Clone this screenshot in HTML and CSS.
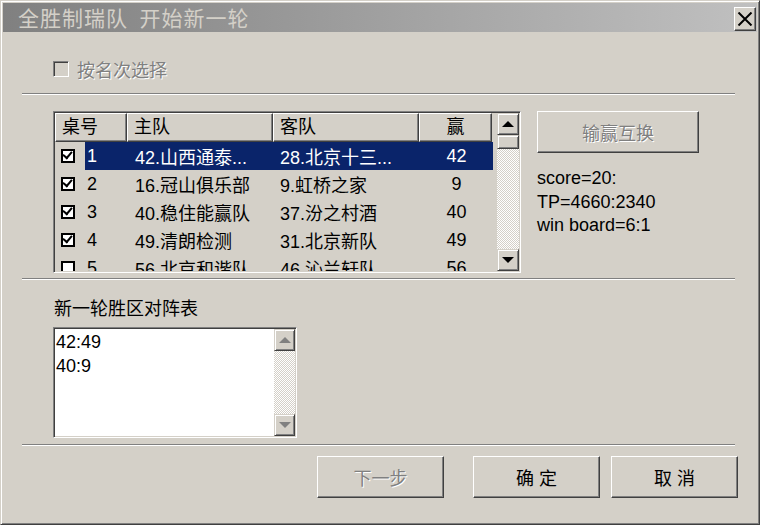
FILE: index.html
```html
<!DOCTYPE HTML>
<html>

<head>
  <meta charset="utf-8">
  <link rel="stylesheet" href="styles.css">
</head>

<body>
  <div class="window">
    <div class="titlebar">
      <span class="title">全胜制瑞队&nbsp;&nbsp;开始新一轮</span>
      <div class="close">
        <svg width="16" height="14" viewBox="0 0 16 14">
          <path d="M1.5 0.5 L14.5 13.5 M14.5 0.5 L1.5 13.5" stroke="#000" stroke-width="2" fill="none"/>
        </svg>
      </div>
    </div>

    <div class="content">
      <div class="rank-opt">
        <span class="chk3d"></span>
        <span class="dis">按名次选择</span>
      </div>

      <div class="sep"></div>

      <div class="middle">
        <div class="listview">
          <div class="lv-main">
            <div class="lv-head">
              <div class="hcell c1">桌号</div>
              <div class="hcell c2">主队</div>
              <div class="hcell c3">客队</div>
              <div class="hcell c4 center">赢</div>
            </div>
            <div class="lv-rows">
              <div class="row selected">
                <span class="chk on"></span>
                <div class="sel">
                  <span class="num">1</span>
                  <span class="c2">42.山西通泰...</span>
                  <span class="c3">28.北京十三...</span>
                  <span class="c4 center">42</span>
                </div>
              </div>
              <div class="row">
                <span class="chk on"></span>
                <div class="sel">
                  <span class="num">2</span>
                  <span class="c2">16.冠山俱乐部</span>
                  <span class="c3">9.虹桥之家</span>
                  <span class="c4 center">9</span>
                </div>
              </div>
              <div class="row">
                <span class="chk on"></span>
                <div class="sel">
                  <span class="num">3</span>
                  <span class="c2">40.稳住能赢队</span>
                  <span class="c3">37.汾之村酒</span>
                  <span class="c4 center">40</span>
                </div>
              </div>
              <div class="row">
                <span class="chk on"></span>
                <div class="sel">
                  <span class="num">4</span>
                  <span class="c2">49.清朗检测</span>
                  <span class="c3">31.北京新队</span>
                  <span class="c4 center">49</span>
                </div>
              </div>
              <div class="row">
                <span class="chk"></span>
                <div class="sel">
                  <span class="num">5</span>
                  <span class="c2">56.北京和谐队</span>
                  <span class="c3">46.沁兰轩队</span>
                  <span class="c4 center">56</span>
                </div>
              </div>
            </div>
          </div>
          <div class="vscroll">
            <div class="sbtn"><span class="arr up"></span></div>
            <div class="thumb"></div>
            <div class="track"></div>
            <div class="sbtn"><span class="arr down"></span></div>
          </div>
        </div>

        <div class="side">
          <div class="btn swap"><span class="dis">输赢互换</span></div>
          <div class="stats">
            score=20:<br>
            TP=4660:2340<br>
            win board=6:1
          </div>
        </div>
      </div>

      <div class="sep sep2"></div>

      <div class="caption">新一轮胜区对阵表</div>
      <div class="memo">
        <div class="memo-text">
          42:49<br>
          40:9
        </div>
        <div class="vscroll small">
          <div class="sbtn"><span class="arr up grey"></span></div>
          <div class="track"></div>
          <div class="sbtn"><span class="arr down grey"></span></div>
        </div>
      </div>

      <div class="sep sep3"></div>

      <div class="actions">
        <div class="btn"><span class="dis">下一步</span></div>
        <div class="btn ok">确&nbsp;定</div>
        <div class="btn">取&nbsp;消</div>
      </div>
    </div>
  </div>
</body>

</html>
```

FILE: styles.css
```css
html, body {
    margin: 0;
    padding: 0;
    background: #d4d0c8;
}
body {
    font-family: "Liberation Sans", "Noto Sans CJK SC", sans-serif;
    font-size: 18px;
    color: #000;
}
.window {
    width: 760px;
    height: 525px;
    box-sizing: border-box;
    border: 1px solid;
    border-color: #d4d0c8 #404040 #404040 #d4d0c8;
    box-shadow: inset 1px 1px #fff, inset -1px -1px #808080;
    padding: 2px;
    background: #d4d0c8;
}

/* title bar */
.titlebar {
    height: 29px;
    display: flex;
    align-items: center;
    justify-content: space-between;
    background: linear-gradient(to right, #808080, #c0c0c0);
    padding: 0 1px 0 15px;
}
.title {
    color: #d4d0c8;
    font-size: 21px;
    letter-spacing: 1px;
    font-family: "Noto Sans CJK SC", sans-serif;
    line-height: 29px;
}
.close {
    width: 22px;
    height: 24px;
    box-sizing: border-box;
    border: 1px solid;
    border-color: #fff #404040 #404040 #fff;
    box-shadow: inset -1px -1px #808080;
    background: #d4d0c8;
    display: flex;
    align-items: center;
    justify-content: center;
    margin-top: 2px;
}

.content {
    padding: 0 22px 0 19px;
}

/* disabled text */
.dis {
    color: #808080;
    text-shadow: 1px 1px 0 #fff;
}

.rank-opt {
    margin: 28px 0 0 31px;
    height: 17px;
    display: flex;
    align-items: center;
    gap: 8px;
}
.chk3d {
    width: 16px;
    height: 16px;
    box-sizing: border-box;
    border: 1px solid;
    border-color: #808080 #fff #fff #808080;
    box-shadow: inset 1px 1px #404040, inset -1px -1px #d4d0c8;
}

.sep {
    height: 0;
    border-top: 1px solid #808080;
    border-bottom: 1px solid #fff;
    margin-top: 16px;
}

/* list + side */
.middle {
    display: flex;
    margin-top: 16px;
    padding-left: 31px;
    gap: 16px;
}
.listview {
    width: 468px;
    height: 162px;
    box-sizing: border-box;
    border: 1px solid;
    border-color: #808080 #fff #fff #808080;
    box-shadow: inset 1px 1px #404040, inset -1px -1px #d4d0c8;
    padding: 1px;
    display: flex;
}
.lv-main {
    width: 442px;
    overflow: hidden;
}
.lv-head {
    display: flex;
    height: 29px;
}
.hcell {
    box-sizing: border-box;
    border: 1px solid;
    border-color: #fff #404040 #404040 #fff;
    box-shadow: inset -1px -1px #808080;
    padding-left: 6px;
    line-height: 26px;
}
.c1 { width: 72px; }
.c2 { width: 146px; }
.c3 { width: 146px; }
.c4 { width: 73px; }
.center { text-align: center; padding-left: 0; }

.lv-rows {
    height: 129px;
    overflow: hidden;
}
.row {
    display: flex;
    height: 28px;
    align-items: center;
}
.chk {
    width: 14px;
    height: 14px;
    box-sizing: border-box;
    border: 2px solid #000;
    background: #fff;
    margin: 0 10px 0 6px;
    position: relative;
}
.chk.on::after {
    content: "";
    position: absolute;
    left: 0px;
    top: 0px;
    width: 7px;
    height: 4px;
    border-left: 2.5px solid #000;
    border-bottom: 2.5px solid #000;
    transform: rotate(-50deg);
}
.sel {
    display: flex;
    height: 28px;
    align-items: center;
    width: 408px;
}
.sel span {
    white-space: nowrap;
    overflow: hidden;
}
.num {
    width: 43px;
    padding-left: 2px;
    box-sizing: border-box;
}
.sel .c2 { padding-left: 7px; box-sizing: border-box; }
.sel .c3 { padding-left: 6px; box-sizing: border-box; }
.selected .sel {
    background: #0a246a;
    color: #fff;
}

/* scrollbars */
.vscroll {
    width: 22px;
    display: flex;
    flex-direction: column;
}
.sbtn, .thumb {
    height: 22px;
    box-sizing: border-box;
    border: 1px solid;
    border-color: #d4d0c8 #404040 #404040 #d4d0c8;
    box-shadow: inset 1px 1px #fff, inset -1px -1px #808080;
    background: #d4d0c8;
    display: flex;
    align-items: center;
    justify-content: center;
}
.thumb {
    height: 14px;
}
.track {
    flex: 1;
    background: repeating-conic-gradient(#fff 0 25%, #d4d0c8 0 50%) 0 0 / 2px 2px;
}
.arr {
    width: 0;
    height: 0;
    border-left: 6px solid transparent;
    border-right: 6px solid transparent;
}
.arr.up { border-bottom: 6px solid #000; }
.arr.down { border-top: 6px solid #000; }
.arr.up.grey { border-bottom-color: #808080; }
.arr.down.grey { border-top-color: #808080; }

.side {
    display: flex;
    flex-direction: column;
}
.btn {
    width: 127px;
    height: 42px;
    box-sizing: border-box;
    border: 1px solid;
    border-color: #fff #404040 #404040 #fff;
    box-shadow: inset -1px -1px #808080;
    background: #d4d0c8;
    display: flex;
    align-items: center;
    justify-content: center;
}
.swap {
    width: 162px;
}
.stats {
    margin-top: 14px;
    line-height: 23.5px;
}

.sep2 {
    margin-top: 5px;
}

.caption {
    margin: 18px 0 0 32px;
    height: 22px;
    line-height: 22px;
    color: #000;
}

.memo {
    margin: 7px 0 0 31px;
    width: 244px;
    height: 111px;
    box-sizing: border-box;
    border: 1px solid;
    border-color: #808080 #fff #fff #808080;
    box-shadow: inset 1px 1px #404040, inset -1px -1px #d4d0c8;
    padding: 1px;
    background: #fff;
    display: flex;
}
.memo-text {
    flex: 1;
    padding: 1px 0 0 1px;
    line-height: 24px;
}
.vscroll.small {
    width: 21px;
}

.sep3 {
    margin-top: 6px;
}

.actions {
    display: flex;
    justify-content: flex-end;
    margin: 10px -3px 0 0;
}
.actions .btn:first-child {
    margin-right: 29px;
}
.actions .ok {
    margin-right: 11px;
}
```
